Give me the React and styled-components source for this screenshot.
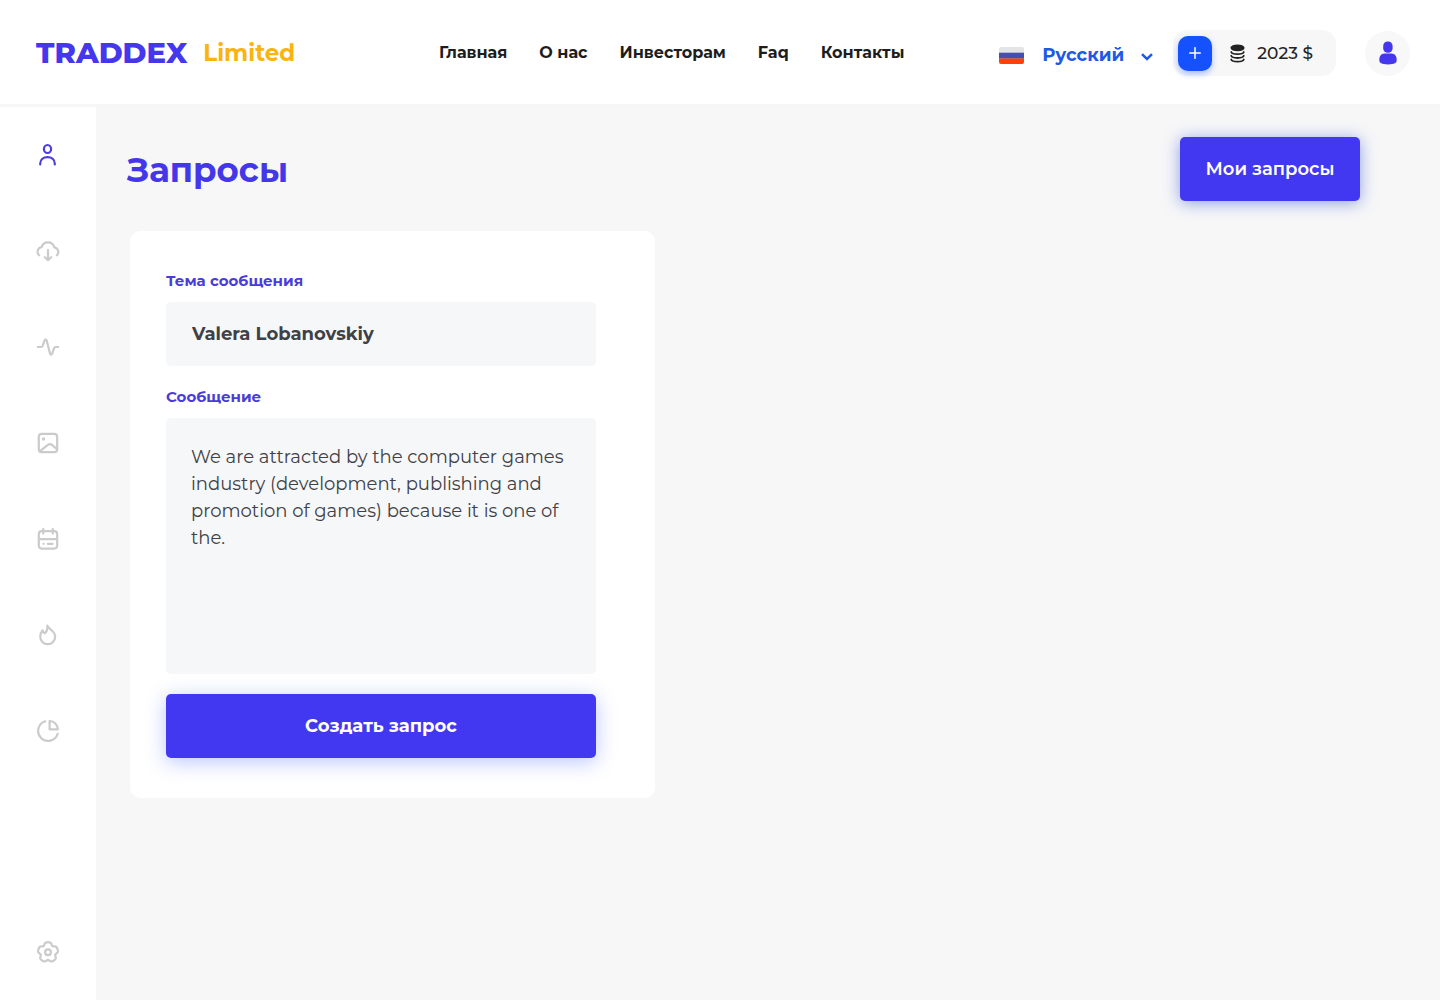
import React, { useState } from "react";
import styled, { createGlobalStyle } from "styled-components";

const GlobalStyle = createGlobalStyle`
  *, *::before, *::after { box-sizing: border-box; }
  body {
    margin: 0;
    background: #f7f7f8;
    color: #232323;
    font-family: Montserrat, Inter, "Noto Sans", sans-serif;
  }
  button, input, textarea, select { font-family: inherit; }
`;

const Page = styled.div`
  display: flex;
  flex-direction: column;
  min-height: 100vh;
`;

const Header = styled.header`
  display: flex;
  align-items: center;
  height: 107px;
  padding: 2px 30px 0 36px;
  background: #fff;
  border-bottom: 3px solid #f6f6f7;
`;

const Logo = styled.a`
  display: flex;
  align-items: center;
  flex: 0 0 403px;
  gap: 16px;
  color: #4437ee;
  font-size: 29px;
  font-weight: 800;
  line-height: 36px;
  text-decoration: none;
`;

const LogoSuffix = styled.span`
  color: #fab411;
  font-size: 23px;
  font-weight: 700;
`;

const Nav = styled.nav`
  display: flex;
  gap: 32px;
`;

const NavLink = styled.a`
  color: #1d1d1d;
  font-size: 16px;
  font-weight: 700;
  line-height: 20px;
  text-decoration: none;
  white-space: nowrap;
`;

const Tools = styled.div`
  display: flex;
  align-items: center;
  margin-left: auto;
`;

const Language = styled.label`
  display: flex;
  align-items: center;
  gap: 18px;
  margin-right: 20px;
  padding-top: 4px;
`;

const SelectBox = styled.span`
  display: grid;
  align-items: center;
  > * { grid-area: 1 / 1; }
  > svg { justify-self: end; margin-top: 4px; pointer-events: none; }
`;

const Select = styled.select`
  appearance: none;
  width: 111px;
  padding: 0;
  border: 0;
  background: transparent;
  color: #2058e8;
  font-size: 18px;
  font-weight: 700;
  line-height: 24px;
`;

const Balance = styled.div`
  display: flex;
  align-items: center;
  gap: 18px;
  height: 46px;
  margin-right: 29px;
  padding: 0 23px 0 5px;
  border-radius: 14px;
  background: #f7f7f8;
`;

const TopUp = styled.button`
  display: grid;
  place-items: center;
  width: 34px;
  height: 35px;
  padding: 0;
  border: 0;
  border-radius: 10px;
  background: #1551ff;
  box-shadow: 0 3px 6px rgba(21, 81, 255, 0.35);
`;

const Amount = styled.span`
  display: flex;
  align-items: center;
  gap: 12px;
  font-size: 17px;
  font-weight: 500;
  line-height: 20px;
`;

const Avatar = styled.button`
  display: grid;
  place-items: center;
  width: 45px;
  height: 45px;
  padding: 0;
  border: 0;
  border-radius: 50%;
  background: #f8f8f9;
`;

const Body = styled.div`
  display: flex;
  flex: 1;
`;

const Sidebar = styled.aside`
  display: flex;
  flex-direction: column;
  flex: 0 0 96px;
  background: #fff;
`;

const SideButton = styled.button`
  display: grid;
  place-items: center;
  height: 96px;
  padding: 0;
  border: 0;
  background: transparent;
  color: ${(p) => (p.$active ? "#4b3fd6" : "#cbcbcb")};
  ${(p) => p.$last && "margin-top: auto;"}
`;

const Main = styled.main`
  flex: 1;
  padding: 30px 80px 30px 31px;
`;

const TitleRow = styled.div`
  display: flex;
  align-items: center;
  justify-content: space-between;
`;

const Title = styled.h1`
  margin: 0;
  padding-top: 2px;
  color: #4437e8;
  font-size: 34px;
  font-weight: 700;
  line-height: 44px;
`;

const PrimaryButton = styled.button`
  height: 64px;
  padding: 0;
  border: 0;
  border-radius: 5px;
  background: #4338f2;
  color: #fff;
  font-size: 18px;
  font-weight: ${(p) => (p.$wide ? 700 : 600)};
  line-height: 24px;
  width: ${(p) => (p.$wide ? "100%" : "180px")};
  box-shadow: ${(p) =>
    p.$wide ? "0 4px 20px rgba(67, 96, 255, 0.36)" : "0 2px 16px rgba(50, 85, 215, 0.55)"};
`;

const Card = styled.form`
  display: flex;
  flex-direction: column;
  gap: 20px;
  max-width: 525px;
  margin: 30px 0 0 3px;
  padding: 39px 59px 40px 36px;
  border-radius: 11px;
  background: #fff;
`;

const Field = styled.div`
  display: flex;
  flex-direction: column;
  gap: 10px;
`;

const Label = styled.label`
  color: #4a3cd8;
  font-size: 15px;
  font-weight: 700;
  line-height: 22px;
`;

const TextInput = styled.input`
  width: 100%;
  height: 64px;
  padding: 0 26px;
  border: 0;
  border-radius: 5px;
  background: #f6f7f9;
  color: #3e4145;
  font-size: 18px;
  font-weight: 700;
`;

const TextArea = styled.textarea`
  display: block;
  width: 100%;
  height: 256px;
  padding: 26px 25px;
  border: 0;
  border-radius: 5px;
  resize: none;
  background: #f6f7f9;
  color: #3e4145;
  font-size: 18px;
  font-weight: 400;
  line-height: 27px;
`;

const Line = ({ children }) => (
  <svg width="24" height="24" viewBox="0 0 24 24" fill="none" stroke="currentColor"
    strokeWidth="2.2" strokeLinecap="round" strokeLinejoin="round" aria-hidden="true">
    {children}
  </svg>
);

const gearPath =
  Array.from({ length: 100 }, (_, i) => {
    const t = (i / 100) * Math.PI * 2;
    const r = 9.2 + 1.2 * Math.cos(5 * t) - 0.4 * Math.cos(10 * t);
    const x = 12 + r * Math.sin(t);
    const y = 12.3 - r * Math.cos(t);
    return `${i ? "L" : "M"}${x.toFixed(2)} ${y.toFixed(2)}`;
  }).join("") + "Z";

const sections = [
  { name: "Профиль", icon: <><ellipse cx="11.5" cy="6" rx="3.6" ry="4" /><path d="M4.2 21.5v-.8c0-4 3.2-6.6 7.3-6.6s7.3 2.6 7.3 6.6v.8" /></> },
  { name: "Загрузки", icon: <><path d="M3.1 16.3A4.7 4.7 0 0 1 5.6 8.2 6.6 6.6 0 0 1 18.3 8.3 4.7 4.7 0 0 1 20.9 16.3" /><path d="M12 11v10M8.9 18.2 12 21.2l3.1-3" /></> },
  { name: "Активность", icon: <path d="M1.8 12h3.4c.8 0 1.1-.4 1.4-1.1l2-5.5c.5-1.3 1.7-1.2 2.1.1l3.3 13c.4 1.4 1.7 1.5 2.2.1l1.9-5.4c.3-.8.6-1.2 1.5-1.2h2.6" /> },
  { name: "Изображения", icon: <><rect x="2.8" y="2.8" width="18.4" height="18.4" rx="3" /><path d="m4 20.2 8.2-6.5c1.2-.9 2.2-.9 3.4 0l5.4 4.4" /><circle cx="7.5" cy="8" r=".7" fill="currentColor" /></> },
  { name: "Календарь", icon: <><rect x="2.8" y="4.2" width="18.4" height="17.4" rx="3" /><path d="M3 12.2h18M7.2 2v4.6M16.8 2v4.6M7.5 16.8h.1M11.8 16.8h4.8" /></> },
  { name: "Популярное", icon: <path d="M11.3 2.6c.8 2.4 3 3.5 4.9 5.2 2 1.8 3 3.6 3 5.8a7.5 7.5 0 0 1-15 0c0-2.8 1.2-4.8 2.4-6.3.2 1.5.8 2.5 2.1 3 1.8-1.3 2.9-4.4 2.6-7.7Z" /> },
  { name: "Статистика", icon: <><path d="M9.2 2.3A10 10 0 1 0 21.7 14.8" /><path d="M13.6 2v8.4h8.2C21.6 5.8 18.2 2.2 13.6 2Z" /></> },
];

const Flag = () => (
  <svg width="25" height="17" viewBox="0 0 25 17" aria-hidden="true">
    <path d="M2 0h21a2 2 0 0 1 2 2v4H0V2a2 2 0 0 1 2-2Z" fill="#e3e4e6" />
    <path d="M0 5.7h25v6H0Z" fill="#454fae" />
    <path d="M0 11.4h25V15a2 2 0 0 1-2 2H2a2 2 0 0 1-2-2Z" fill="#ff4203" />
  </svg>
);

const Coins = () => (
  <svg width="15" height="19" viewBox="0 0 15 19" fill="none" stroke="#232323" strokeWidth="1.8" strokeLinecap="round" aria-hidden="true">
    <ellipse cx="7.5" cy="3.8" rx="6.2" ry="2.5" fill="#232323" />
    <path d="M1.2 8c1 2.900 11.600 2.900 12.600 0M1.200 11.800c1 2.900 11.600 2.900 12.600 0M1.200 15.500c1 2.900 11.600 2.900 12.600 0" />
  </svg>
);

const links = ["Главная", "О нас", "Инвесторам", "Faq", "Контакты"];

export default function App() {
  const [subject, setSubject] = useState("Valera Lobanovskiy");
  const [message, setMessage] = useState(
    "We are attracted by the computer games industry (development, publishing and promotion of games) because it is one of the."
  );

  return (
    <Page>
      <GlobalStyle />
      <Header>
        <Logo href="#home">TRADDEX <LogoSuffix>Limited</LogoSuffix></Logo>
        <Nav>
          {links.map((text) => <NavLink key={text} href="#home">{text}</NavLink>)}
        </Nav>
        <Tools>
          <Language>
            <Flag />
            <SelectBox>
              <Select aria-label="Язык" defaultValue="ru">
                <option value="ru">Русский</option>
              </Select>
              <svg width="12" height="8" viewBox="0 0 12 8" fill="none" stroke="#2058e8" strokeWidth="2.5" aria-hidden="true">
                <path d="m1 1.2 5 4.8 5-4.8" />
              </svg>
            </SelectBox>
          </Language>
          <Balance>
            <TopUp type="button" aria-label="Пополнить">
              <svg width="12" height="12" viewBox="0 0 12 12" stroke="#fff" strokeWidth="1.5" strokeLinecap="round" aria-hidden="true">
                <path d="M6 .7v10.6M.7 6h10.6" />
              </svg>
            </TopUp>
            <Amount><Coins />2023 $</Amount>
          </Balance>
          <Avatar type="button" aria-label="Аккаунт">
            <svg width="18" height="24" viewBox="0 0 18 24" fill="#4437ee" aria-hidden="true">
              <rect x="4.2" y="0.5" width="9.4" height="11.2" rx="4.4" />
              <path d="M5.5 12.500h7C15.800 12.500 17.700 15.300 17.700 18.800c0 3.400-2.200 4.600-8.700 4.600S.3 22.200.3 18.800C.3 15.300 2.200 12.500 5.500 12.500Z" />
            </svg>
          </Avatar>
        </Tools>
      </Header>
      <Body>
        <Sidebar>
          {sections.map((s, i) => (
            <SideButton key={s.name} type="button" aria-label={s.name} $active={i === 0}>
              <Line>{s.icon}</Line>
            </SideButton>
          ))}
          <SideButton type="button" aria-label="Настройки" $last>
            <Line><path d={gearPath} /><circle cx="12" cy="12.3" r="2.9" /></Line>
          </SideButton>
        </Sidebar>
        <Main>
          <TitleRow>
            <Title>Запросы</Title>
            <PrimaryButton type="button">Мои запросы</PrimaryButton>
          </TitleRow>
          <Card onSubmit={(e) => e.preventDefault()}>
            <Field>
              <Label htmlFor="subject">Тема сообщения</Label>
              <TextInput id="subject" value={subject} onChange={(e) => setSubject(e.target.value)} />
            </Field>
            <Field>
              <Label htmlFor="message">Сообщение</Label>
              <TextArea id="message" value={message} onChange={(e) => setMessage(e.target.value)} />
            </Field>
            <PrimaryButton type="submit" $wide>Создать запрос</PrimaryButton>
          </Card>
        </Main>
      </Body>
    </Page>
  );
}
